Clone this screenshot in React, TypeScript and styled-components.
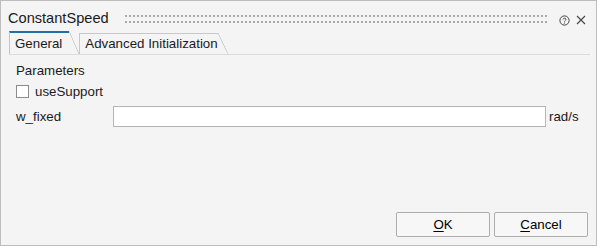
import React from 'react';
import styled, {createGlobalStyle} from 'styled-components';

const Global = createGlobalStyle`
html, body {
  margin: 0;
  padding: 0;
  background: #f4f4f4;
}
body {
  font-family: "Liberation Sans", Arial, sans-serif;
  font-size: 13.3px;
  color: #1a1a1a;
}
`;

const Dialog = styled.div`
width: 597px;
height: 246px;
box-sizing: border-box;
border: 1px solid #bdbdbd;
background: #f4f4f4;
display: flex;
flex-direction: column;
`;

const TitleBar = styled.div`
display: flex;
align-items: center;
height: 17px;
padding: 9px 10px 0 7px;
`;

const Title = styled.div`
font-size: 14.6px;
line-height: 17px;
color: #1a1a1a;
`;

const Grip = styled.div`
flex: 1;
height: 8px;
margin: 1px 10px 0 16px;
background-image: linear-gradient(to bottom, transparent 0 2px, #f4f4f4 2px 6px, transparent 6px),
  linear-gradient(to right, #a9a9a9 0 2px, transparent 2px 4px);
background-size: 100% 8px, 4px 8px;
`;

const IconButton = styled.span<{$gap?: number}>`
display: flex;
align-items: center;
justify-content: center;
width: 11px;
height: 11px;
margin-left: ${p => p.$gap || 0}px;
margin-top: 3px;
color: #444;
`;

const TabStrip = styled.div`
display: flex;
align-items: flex-end;
margin: 4px 6px 0 8px;
border-bottom: 1px solid #dcdcdc;
`;

const Tab = styled.div<{$active?: boolean}>`
position: relative;
line-height: 15px;
padding: ${p => (p.$active ? '3px 7px 3px 5px' : '2px 0 3px 5px')};
margin-left: ${p => (p.$active ? 0 : 10)}px;
border-left: 1px solid ${p => (p.$active ? '#c4c4c4' : '#c8c8c8')};
border-top: ${p => (p.$active ? '2px solid #1f6ea6' : '1px solid #c8c8c8')};
color: #1a1a1a;
white-space: nowrap;
&::after {
  content: '';
  position: absolute;
  top: ${p => (p.$active ? -2 : -1)}px;
  right: -10px;
  width: 10px;
  bottom: 0;
  background: linear-gradient(to top right, transparent 0 calc(50% - 0.7px), #c4c4c4 50%, transparent calc(50% + 0.7px));
}
`;

const Content = styled.div`
flex: 1;
padding: 8px 8px 0 15px;
display: flex;
flex-direction: column;
`;

const GroupLabel = styled.div`
line-height: 15px;
`;

const CheckRow = styled.label`
display: flex;
align-items: center;
gap: 6px;
margin-top: 6px;
line-height: 15px;
`;

const Box = styled.span`
width: 11px;
height: 11px;
border: 1px solid #8c8c8c;
background: #fff;
`;

const FieldRow = styled.div`
display: flex;
align-items: center;
margin-top: 7px;
`;

const FieldLabel = styled.div`
width: 97px;
`;

const Input = styled.input`
width: 433px;
height: 21px;
box-sizing: border-box;
border: 1px solid #b4b4b4;
background: #fff;
outline: none;
padding: 0 4px;
font: inherit;
`;

const Unit = styled.div`
margin-left: 3px;
`;

const Footer = styled.div`
display: flex;
justify-content: flex-end;
gap: 4px;
padding: 0 8px 8px 0;
`;

const Button = styled.button`
width: 94px;
height: 25px;
box-sizing: border-box;
border: 1px solid #adadad;
border-radius: 2px;
background: #f7f7f7;
font-family: "Liberation Sans", Arial, sans-serif;
font-size: 13.3px;
color: #000;
padding: 0;
u { text-decoration: underline; text-underline-offset: 2px; }
`;

function HelpIcon() {
    return <svg width="11" height="11" viewBox="0 0 11 11" fill="none" stroke="#444" strokeWidth="1">
        <circle cx="5.5" cy="5.5" r="4.6"/>
        <path d="M4 4.4 C4 2.8 7 2.8 7 4.4 C7 5.4 5.5 5.4 5.5 6.6"/>
        <circle cx="5.5" cy="8.1" r="0.6" fill="#444" stroke="none"/>
    </svg>
}

function CloseIcon() {
    return <svg width="10" height="10" viewBox="0 0 10 10" stroke="#444" strokeWidth="1.1">
        <path d="M1 1 L9 9 M9 1 L1 9"/>
    </svg>
}

function App() {
    return (
        <>
            <Global/>
            <Dialog>
                <TitleBar>
                    <Title>ConstantSpeed</Title>
                    <Grip/>
                    <IconButton><HelpIcon/></IconButton>
                    <IconButton $gap={5}><CloseIcon/></IconButton>
                </TitleBar>
                <TabStrip>
                    <Tab $active>General</Tab>
                    <Tab>Advanced Initialization</Tab>
                </TabStrip>
                <Content>
                    <GroupLabel>Parameters</GroupLabel>
                    <CheckRow><Box/>useSupport</CheckRow>
                    <FieldRow>
                        <FieldLabel>w_fixed</FieldLabel>
                        <Input defaultValue=""/>
                        <Unit>rad/s</Unit>
                    </FieldRow>
                </Content>
                <Footer>
                    <Button><u>O</u>K</Button>
                    <Button><u>C</u>ancel</Button>
                </Footer>
            </Dialog>
        </>
    )
}

export default App;
